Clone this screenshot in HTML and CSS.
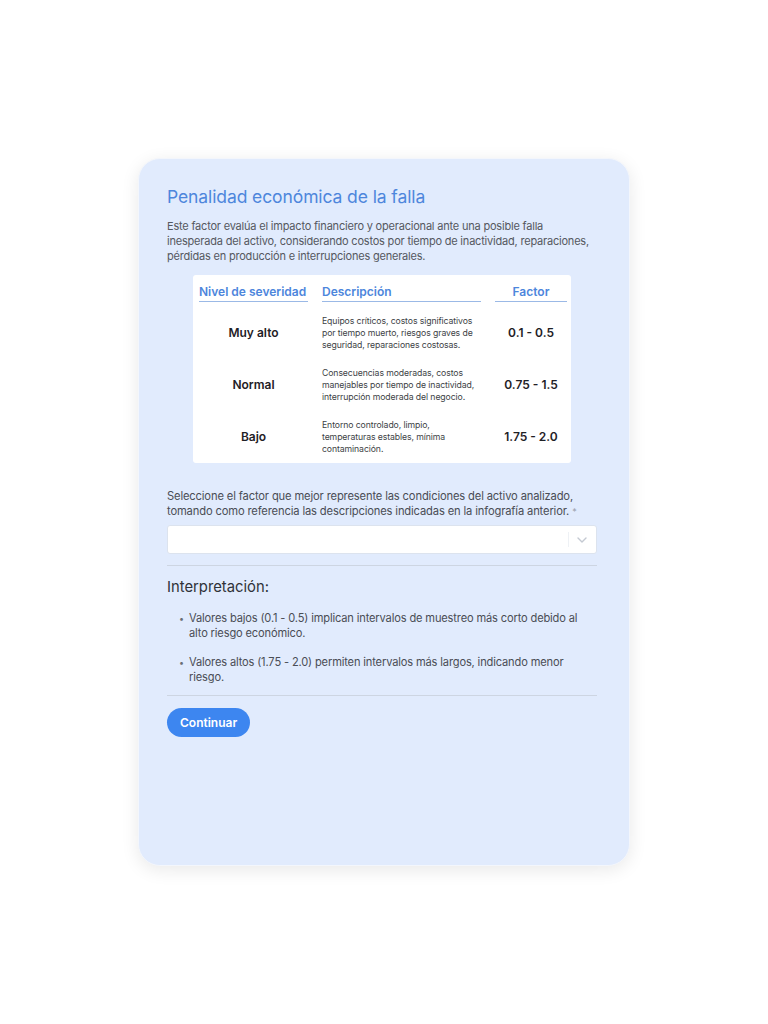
FILE: index.html
```html
<!DOCTYPE html>
<html lang="es">
<head>
<meta charset="utf-8">
<title>Penalidad económica de la falla</title>
<link rel="stylesheet" href="styles.css">
</head>
<body>
<div class="page">
  <div class="card">
    <h1 class="title">Penalidad económica de la falla</h1>
    <p class="intro">Este factor evalúa el impacto financiero y operacional ante una posible falla inesperada del activo, considerando costos por tiempo de inactividad, reparaciones, pérdidas en producción e interrupciones generales.</p>

    <div class="infographic">
      <div class="grid">
        <div class="th th-level">Nivel de severidad</div>
        <div class="th th-desc">Descripción</div>
        <div class="th th-factor">Factor</div>

        <div class="level">Muy alto</div>
        <div class="desc">Equipos críticos, costos significativos por tiempo muerto, riesgos graves de seguridad, reparaciones costosas.</div>
        <div class="factor">0.1 - 0.5</div>

        <div class="level">Normal</div>
        <div class="desc">Consecuencias moderadas, costos manejables por tiempo de inactividad, interrupción moderada del negocio.</div>
        <div class="factor">0.75 - 1.5</div>

        <div class="level">Bajo</div>
        <div class="desc">Entorno controlado, limpio, temperaturas estables, mínima contaminación.</div>
        <div class="factor">1.75 - 2.0</div>
      </div>
    </div>

    <label class="field-label">Seleccione el factor que mejor represente las condiciones del activo analizado, tomando como referencia las descripciones indicadas en la infografía anterior. <span class="req">*</span></label>
    <div class="select">
      <span class="select-sep"></span>
      <svg class="chev" width="10" height="6" viewBox="0 0 10 6"><path d="M1 1l4 4 4-4" fill="none" stroke="#c4c9d2" stroke-width="1.4" stroke-linecap="round" stroke-linejoin="round"/></svg>
    </div>
    <hr class="divider">

    <h2 class="subtitle">Interpretación:</h2>
    <ul class="bullets">
      <li>Valores bajos (0.1 - 0.5) implican intervalos de muestreo más corto debido al alto riesgo económico.</li>
      <li>Valores altos (1.75 - 2.0) permiten intervalos más largos, indicando menor riesgo.</li>
    </ul>
    <hr class="divider divider-2">

    <button class="btn">Continuar</button>
  </div>
</div>
</body>
</html>
```

FILE: styles.css
```css
* { box-sizing: border-box; }
html, body { margin: 0; padding: 0; background: #ffffff; }
body { font-family: Inter, "Noto Sans", "Liberation Sans", sans-serif; color: #4a4d55; }

.page {
  width: 768px;
  height: 1024px;
  padding-top: 158px;
  display: flex;
  justify-content: center;
  align-items: flex-start;
}

.card {
  width: 492px;
  height: 708px;
  background: #e1ebfd;
  border: 1px solid #f3f6fc;
  border-radius: 22px;
  box-shadow: 0 4px 18px rgba(0, 0, 0, 0.09);
  padding: 27px 32px 0 28px;
}

.title {
  margin: 0;
  font-size: 17.5px;
  font-weight: 400;
  color: #4d86dc;
  letter-spacing: -0.1px;
  line-height: 22px;
}

.intro {
  margin: 11px 0 0;
  font-size: 11px;
  line-height: 15px;
  color: #555860;
  letter-spacing: -0.2px;
}

.infographic {
  width: 378px;
  height: 188px;
  margin: 11px auto 0;
  background: #ffffff;
  border-radius: 3px;
  padding: 10px 6px 0 6px;
}

.grid {
  display: grid;
  grid-template-columns: 109px 159px 72px;
  column-gap: 14px;
  grid-template-rows: 17px 52px 52px 52px;
  align-items: center;
}

.th {
  font-size: 12px;
  font-weight: 600;
  color: #4d86dc;
  border-bottom: 1px solid #9bb9e6;
  height: 17px;
  line-height: 14px;
  align-self: start;
  white-space: nowrap;
}
.th-factor { text-align: center; }

.level {
  font-size: 12px;
  font-weight: 600;
  color: #1f2126;
  text-align: center;
  padding-top: 9px;
}

.desc {
  font-size: 8.7px;
  line-height: 12px;
  color: #3d3f45;
  letter-spacing: -0.1px;
  padding-top: 9px;
}

.factor {
  font-size: 12px;
  font-weight: 600;
  color: #1f2126;
  text-align: center;
  padding-top: 9px;
}

.field-label {
  display: block;
  margin-top: 26px;
  font-size: 11.2px;
  line-height: 15px;
  color: #4a4d55;
  letter-spacing: -0.15px;
}
.req { color: #9aa0aa; font-size: 9px; }

.select {
  margin-top: 6px;
  height: 29px;
  background: #ffffff;
  border: 1px solid #dce3ee;
  border-radius: 3px;
  display: flex;
  justify-content: flex-end;
  align-items: center;
  padding-right: 9px;
  gap: 8px;
}
.select-sep {
  width: 1px;
  height: 15px;
  background: #eef1f5;
}
.chev { display: block; }

.divider {
  margin: 11px 0 0;
  border: 0;
  border-top: 1px solid #cdd5e2;
}

.subtitle {
  margin: 12px 0 0;
  font-size: 14.8px;
  font-weight: 400;
  color: #2f3238;
  line-height: 18px;
}

.bullets {
  margin: 15px 0 0;
  padding: 0 6px 0 22px;
  list-style: none;
}
.bullets li {
  position: relative;
  font-size: 11.1px;
  line-height: 15px;
  color: #4a4d55;
  letter-spacing: -0.15px;
  margin-bottom: 14px;
}
.bullets li:last-child { margin-bottom: 10px; }
.bullets li::before {
  content: "•";
  position: absolute;
  left: -10px;
  top: 0;
  font-size: 9px;
  color: #6a6e76;
}

.divider-2 { margin-top: 0; }

.btn {
  margin-top: 12px;
  height: 29px;
  padding: 0 13px;
  border: 0;
  border-radius: 15px;
  background: #3d86f0;
  color: #ffffff;
  font-family: Inter, "Noto Sans", "Liberation Sans", sans-serif;
  font-size: 12px;
  font-weight: 600;
  cursor: pointer;
}
```
